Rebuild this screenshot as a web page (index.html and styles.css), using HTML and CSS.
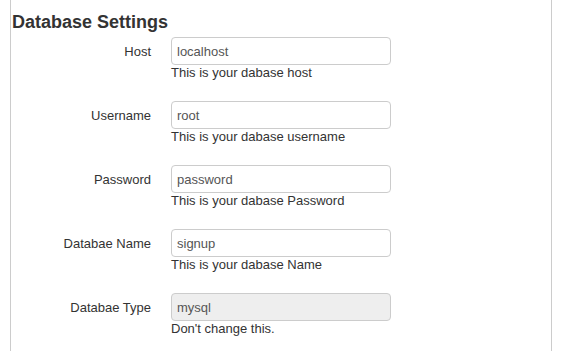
FILE: index.html
```html
<!DOCTYPE html>
<html>
<head>
<meta charset="utf-8">
<title>Database Settings</title>
<link rel="stylesheet" href="styles.css">
</head>
<body>
<div class="panel">
  <h2 class="title">Database Settings</h2>
  <form class="form">
    <div class="row">
      <label class="label">Host</label>
      <div class="control">
        <input class="input" type="text" value="localhost">
        <span class="help">This is your dabase host</span>
      </div>
    </div>
    <div class="row">
      <label class="label">Username</label>
      <div class="control">
        <input class="input" type="text" value="root">
        <span class="help">This is your dabase username</span>
      </div>
    </div>
    <div class="row">
      <label class="label">Password</label>
      <div class="control">
        <input class="input" type="text" value="password">
        <span class="help">This is your dabase Password</span>
      </div>
    </div>
    <div class="row">
      <label class="label">Databae Name</label>
      <div class="control">
        <input class="input" type="text" value="signup">
        <span class="help">This is your dabase Name</span>
      </div>
    </div>
    <div class="row">
      <label class="label">Databae Type</label>
      <div class="control">
        <input class="input input-disabled" type="text" value="mysql" disabled>
        <span class="help">Don't change this.</span>
      </div>
    </div>
  </form>
</div>
</body>
</html>
```
FILE: styles.css
```css
html, body {
  margin: 0;
  padding: 0;
  background: #fff;
}
body {
  font-family: "Liberation Sans", Arial, sans-serif;
  font-size: 13px;
  color: #333;
}
.panel {
  margin-left: 10px;
  width: 539px;
  min-height: 339px;
  border-left: 1px solid #cccccc;
  border-right: 1px solid #cccccc;
  padding: 12px 0 0 1px;
}
.title {
  margin: 0 0 5px;
  font-size: 18px;
  line-height: 20px;
  font-weight: bold;
  color: #333;
}
.form {
  margin: 0;
}
.row {
  display: grid;
  grid-template-columns: 139px 220px;
  column-gap: 20px;
  height: 64px;
}
.label {
  text-align: right;
  padding-top: 6px;
  line-height: 18px;
  color: #333;
}
.control {
  display: flex;
  flex-direction: column;
}
.input {
  box-sizing: border-box;
  width: 220px;
  height: 28px;
  margin: 0;
  padding: 4px 5px;
  border: 1px solid #cccccc;
  border-radius: 4px;
  font-family: "Liberation Sans", Arial, sans-serif;
  font-size: 13px;
  line-height: 18px;
  color: #555;
  background: #fff;
  outline: none;
}
.input-disabled {
  background: #eeeeee;
  color: #555;
}
.help {
  display: block;
  line-height: 15px;
  color: #333;
}
```
